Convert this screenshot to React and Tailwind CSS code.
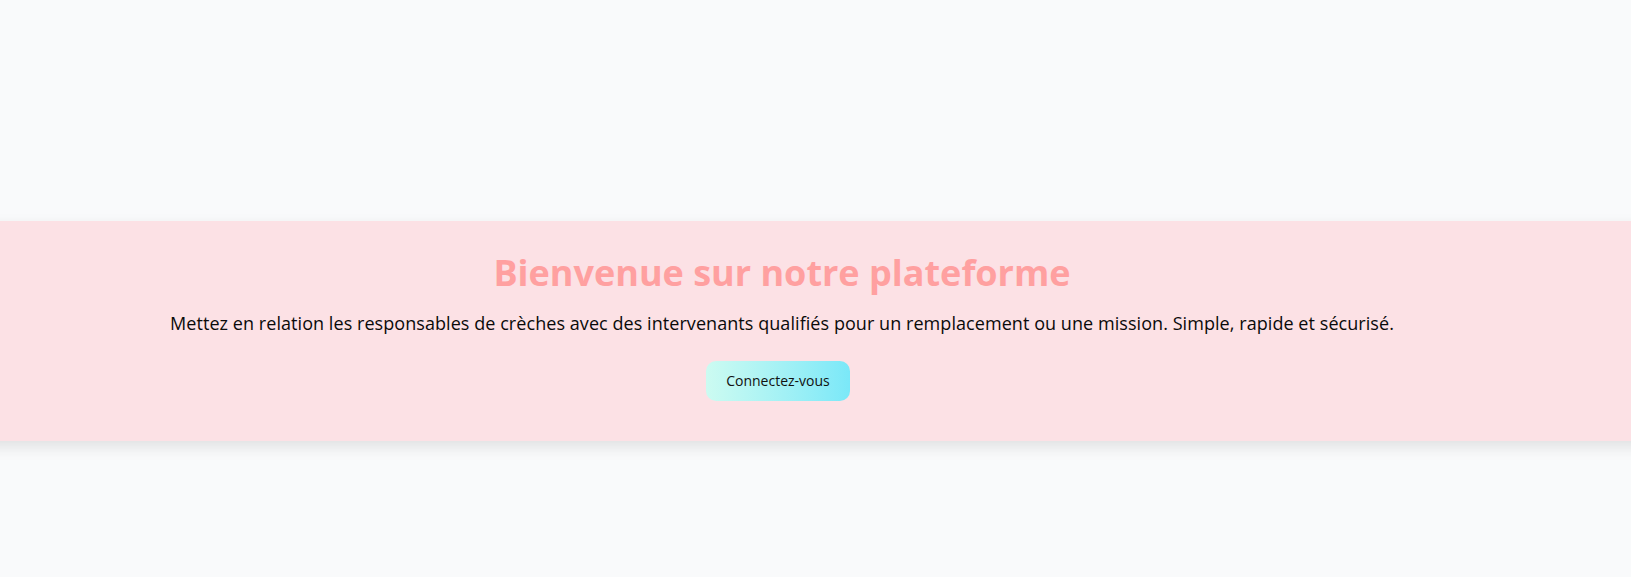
import React from 'react';

const App = () => {
  return (
    <div className="min-h-[577px] bg-gray-50 font-['Open_Sans',sans-serif] pt-[221px] overflow-x-hidden">
      <section className="bg-[#fce1e5] shadow-[0_6px_14px_rgba(0,0,0,0.1)] pt-8 pb-10 -mx-10 px-10">
        <div className="w-[1564px] flex flex-col items-center text-center">
          <h1 className="text-4xl font-bold text-[#ffa0a0] leading-10 mb-4">
            Bienvenue sur notre plateforme
          </h1>
          <p className="text-lg leading-7 text-[#0a0a0a] tracking-[0.06px]">
            Mettez en relation les responsables de crèches avec des intervenants qualifiés pour un remplacement ou une mission. Simple, rapide et sécurisé.
          </p>
          <button className="mt-6 mr-2 px-5 py-2.5 text-sm leading-5 text-[#111111] rounded-[10px] bg-gradient-to-r from-[#ccfbf1] to-[#7ae8f8]">
            Connectez-vous
          </button>
        </div>
      </section>
    </div>
  );
};

export default App;
